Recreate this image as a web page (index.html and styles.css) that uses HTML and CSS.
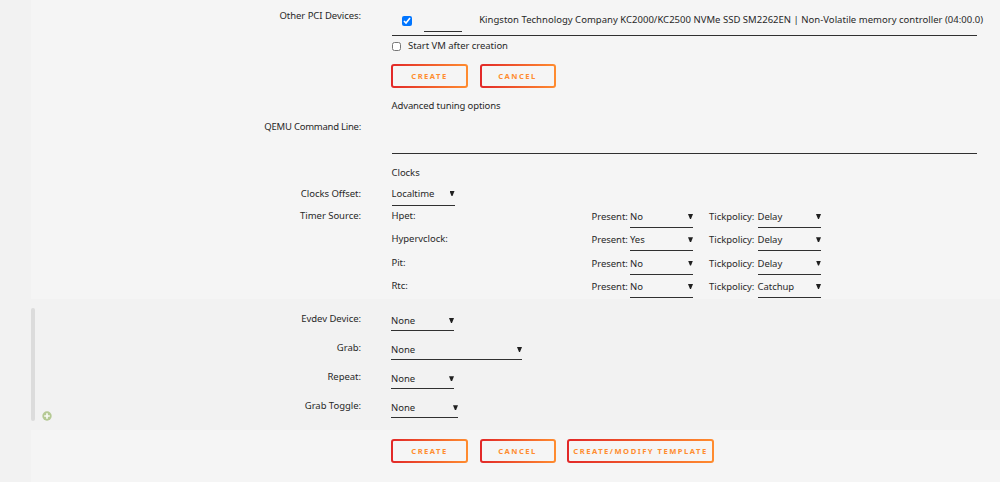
FILE: index.html
```html
<!DOCTYPE html>
<html lang="en">
<head>
<meta charset="utf-8">
<title>VM settings</title>
<link rel="stylesheet" href="styles.css">
</head>
<body>
<main class="page">
  <section class="panel main-panel">
    <div class="row row-pci">
      <div class="label">Other PCI Devices:</div>
      <div class="field pci">
        <input type="checkbox" class="check" checked>
        <span class="order"></span>
        <span class="device">Kingston Technology Company KC2000/KC2500 NVMe SSD SM2262EN | Non-Volatile memory controller (04:00.0)</span>
      </div>
    </div>
    <div class="row row-start">
      <div class="label"></div>
      <div class="field start"><input type="checkbox" class="check"><span>Start VM after creation</span></div>
    </div>
    <div class="row row-buttons">
      <div class="label"></div>
      <div class="field buttons"><button class="btn">CREATE</button><button class="btn btn-cancel">CANCEL</button></div>
    </div>
    <div class="row row-advanced"><div class="label"></div><div class="field">Advanced tuning options</div></div>
    <div class="row row-qemu"><div class="label">QEMU Command Line:</div><div class="field cmdline"></div></div>
    <div class="row row-clocks"><div class="label"></div><div class="field">Clocks</div></div>
    <div class="row row-offset"><div class="label">Clocks Offset:</div><div class="field"><div class="select">Localtime</div></div></div>
    <div class="row row-timers">
      <div class="label">Timer Source:</div>
      <div class="field timers">
        <div class="timer"><span class="name">Hpet:</span><span class="present">Present:</span><div class="select">No</div><span class="policy">Tickpolicy:</span><div class="select wide">Delay</div></div>
        <div class="timer"><span class="name">Hypervclock:</span><span class="present">Present:</span><div class="select">Yes</div><span class="policy">Tickpolicy:</span><div class="select wide">Delay</div></div>
        <div class="timer"><span class="name">Pit:</span><span class="present">Present:</span><div class="select">No</div><span class="policy">Tickpolicy:</span><div class="select wide">Delay</div></div>
        <div class="timer"><span class="name">Rtc:</span><span class="present">Present:</span><div class="select">No</div><span class="policy">Tickpolicy:</span><div class="select wide">Catchup</div></div>
      </div>
    </div>
  </section>
  <section class="panel evdev-panel">
    <div class="side"></div>
    <svg class="add" viewBox="0 0 10 10"><circle cx="5" cy="5" r="4.7" fill="#b5c994"/><path d="M5 2.2v5.6M2.2 5h5.6" stroke="#f8faf4" stroke-width="1.7"/></svg>
    <div class="evdev-rows">
      <div class="row"><div class="label">Evdev Device:</div><div class="field"><div class="select">None</div></div></div>
      <div class="row"><div class="label">Grab:</div><div class="field"><div class="select grab">None</div></div></div>
      <div class="row"><div class="label">Repeat:</div><div class="field"><div class="select">None</div></div></div>
      <div class="row"><div class="label">Grab Toggle:</div><div class="field"><div class="select toggle">None</div></div></div>
    </div>
  </section>
  <section class="panel footer-panel">
    <div class="row row-buttons">
      <div class="label"></div>
      <div class="field buttons"><button class="btn">CREATE</button><button class="btn btn-cancel">CANCEL</button><button class="btn btn-template">CREATE/MODIFY TEMPLATE</button></div>
    </div>
  </section>
</main>
</body>
</html>
```
FILE: styles.css
```css
* { box-sizing: border-box; }

body {
  margin: 0;
  height: 482px;
  overflow: hidden;
  background: #f2f2f2;
  color: #282828;
  font: 9.5px/12px "Noto Sans", sans-serif;
  letter-spacing: -0.04px;
}

.page { padding-left: 31px; }
.panel { background: #f5f5f5; }
.main-panel { height: 299px; }

.row { display: flex; column-gap: 30.5px; }
.label { width: 330px; flex: none; text-align: right; white-space: nowrap; }
.field { width: 585.5px; white-space: nowrap; }

.check { width: 9px; height: 9px; margin: 0; flex: none; }

.row-pci { height: 36px; }
.row-pci .label { padding-top: 10px; }
.pci { display: flex; border-bottom: 1px solid #303030; }
.pci .check { width: 10px; height: 10px; margin: 16px 11.5px 0 10.5px; }
.order { width: 38px; height: 32px; flex: none; border-bottom: 1px solid #303030; }
.device { padding: 14px 0 0 17.7px; letter-spacing: 0.022px; }

.row-start { height: 28px; }
.start { display: flex; gap: 7px; padding-top: 4px; }
.start .check { margin: 2px 0 0 .5px; }

.row-buttons { height: 36px; }
.buttons { display: flex; gap: 11.5px; }
.btn {
  width: 77px;
  height: 24px;
  padding: 1px 0;
  border: 2px solid transparent;
  border-radius: 3px;
  background:
    linear-gradient(#f5f5f5, #f5f5f5) padding-box,
    linear-gradient(90deg, #e22828 0%, #ff8c2f 100%) border-box;
  color: #ff8c2f;
  font: bold 7.6px/16px "Noto Sans", sans-serif;
  letter-spacing: 1.5px;
  white-space: nowrap;
}
.row-buttons { column-gap: 30px; }
.btn-cancel { width: 76px; }
.btn-template { width: 147px; }

.row-advanced { height: 21px; letter-spacing: -0.12px; }
.row-qemu { height: 33px; margin-bottom: 13px; }
.row-qemu .label { letter-spacing: -0.24px; }
.cmdline { border-bottom: 1px solid #303030; }
.row-clocks { height: 21px; }
.row-offset { height: 22px; }
.row-offset .select { padding-top: 0; }

.select {
  display: flex;
  justify-content: space-between;
  width: 63px;
  height: 18px;
  padding-top: 1px;
  border-bottom: 1px solid #303030;
}
.select::after {
  content: "";
  width: 5px;
  height: 5px;
  margin-top: 3px;
  background: #202020;
  clip-path: polygon(0 0, 100% 0, 60% 100%, 40% 100%);
}

.timer { display: flex; height: 23.3px; }
.name { width: 200px; }
.present { width: 38.5px; padding-top: 1px; }
.policy { width: 48.5px; padding-top: 1px; }
.timer .select + .policy { margin-left: 16px; }
.timer .wide { width: 63.5px; }

.evdev-panel { display: flex; height: 131px; padding-top: 9px; background: #f2f2f2; }
.side { width: 4px; height: 113px; flex: none; border-radius: 2px; background: #dcdcdc; }
.add { width: 10px; height: 10px; margin: 102.5px 0 0 6.5px; flex: none; }
.evdev-rows { padding: 5px 0 0 .5px; }
.evdev-rows .row { height: 29.1px; column-gap: 30px; }
.evdev-rows .label { width: 309px; }
.evdev-rows .select { padding-top: 2px; }
.evdev-rows .grab { width: 131px; }
.evdev-rows .toggle { width: 67px; }

.footer-panel { height: 52px; padding-top: 9px; }
```
